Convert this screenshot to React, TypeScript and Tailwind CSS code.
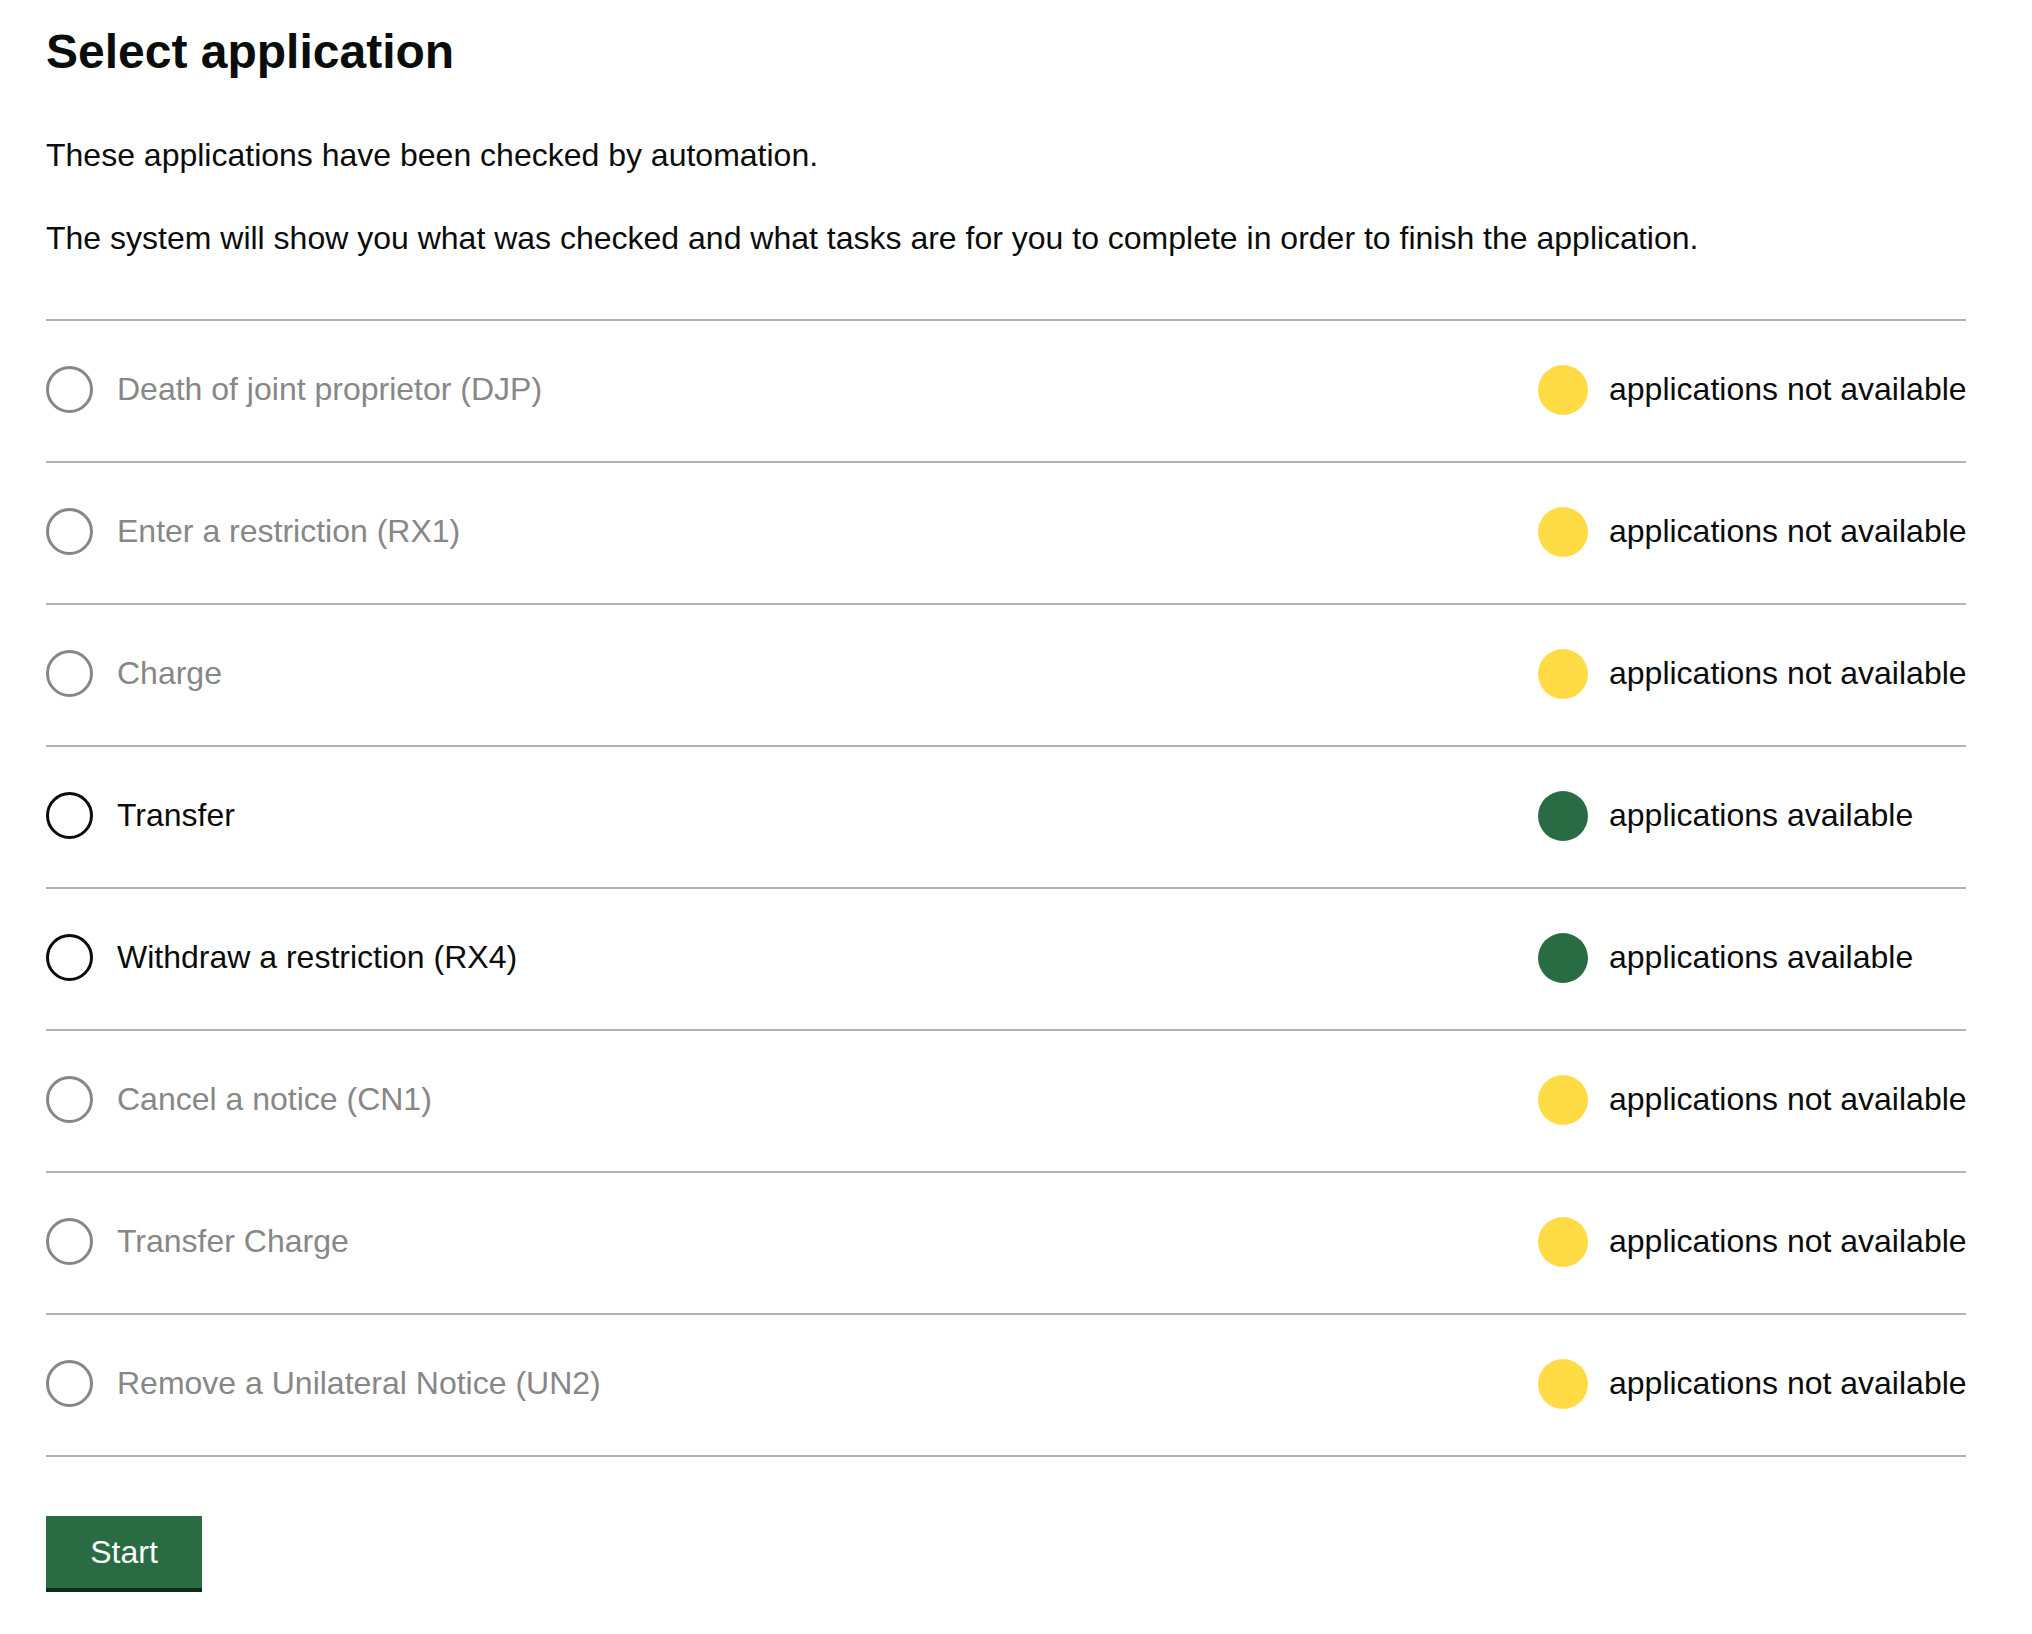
import React from 'react';

type Application = {
  name: string;
  available: boolean;
};

const applications: Application[] = [
  { name: 'Death of joint proprietor (DJP)', available: false },
  { name: 'Enter a restriction (RX1)', available: false },
  { name: 'Charge', available: false },
  { name: 'Transfer', available: true },
  { name: 'Withdraw a restriction (RX4)', available: true },
  { name: 'Cancel a notice (CN1)', available: false },
  { name: 'Transfer Charge', available: false },
  { name: 'Remove a Unilateral Notice (UN2)', available: false },
];

function ApplicationRow({ app }: { app: Application }) {
  return (
    <li className="flex h-[142px] items-center justify-between border-t-2 border-[#b1b4b6] pb-[3px]">
      <label className="flex items-center gap-[24px]">
        <span
          className={
            app.available
              ? 'block h-[47px] w-[47px] rounded-full border-[3px] border-[#0b0c0c]'
              : 'block h-[47px] w-[47px] rounded-full border-[3px] border-[#878787]'
          }
        />
        <span
          className={
            app.available
              ? 'pb-[2px] text-[32px] leading-[40px] text-[#0b0c0c]'
              : 'pb-[2px] text-[32px] leading-[40px] text-[#878787]'
          }
        >
          {app.name}
        </span>
      </label>
      <div className="flex w-[428px] shrink-0 items-center gap-[21px]">
        <span
          className={
            app.available
              ? 'block h-[50px] w-[50px] shrink-0 rounded-full bg-[#296c44]'
              : 'block h-[50px] w-[50px] shrink-0 rounded-full bg-[#ffdc45]'
          }
        />
        <span className="whitespace-nowrap pb-[2px] text-[32px] leading-[40px] text-[#0b0c0c]">
          {app.available ? 'applications available' : 'applications not available'}
        </span>
      </div>
    </li>
  );
}

export default function App() {
  return (
    <main
      className="min-h-screen bg-white pl-[46px] pt-[28px] text-[#0b0c0c]"
      style={{ fontFamily: '"Liberation Sans", Arial, sans-serif' }}
    >
      <div className="w-[1920px]">
        <h1 className="text-[48px] font-bold leading-[48px]">Select application</h1>
        <p className="mt-[59px] text-[32px] leading-[40px]">
          These applications have been checked by automation.
        </p>
        <p className="mt-[43px] text-[32px] leading-[40px]">
          The system will show you what was checked and what tasks are for you to complete in
          order to finish the application.
        </p>

        <ul className="mt-[61px] border-b-2 border-[#b1b4b6]">
          {applications.map((app) => (
            <ApplicationRow key={app.name} app={app} />
          ))}
        </ul>

        <button
          type="button"
          className="mt-[59px] h-[76px] w-[156px] border-b-4 border-[#0d2d1a] bg-[#296c44] text-[32px] leading-[40px] text-white"
        >
          Start
        </button>
      </div>
    </main>
  );
}
